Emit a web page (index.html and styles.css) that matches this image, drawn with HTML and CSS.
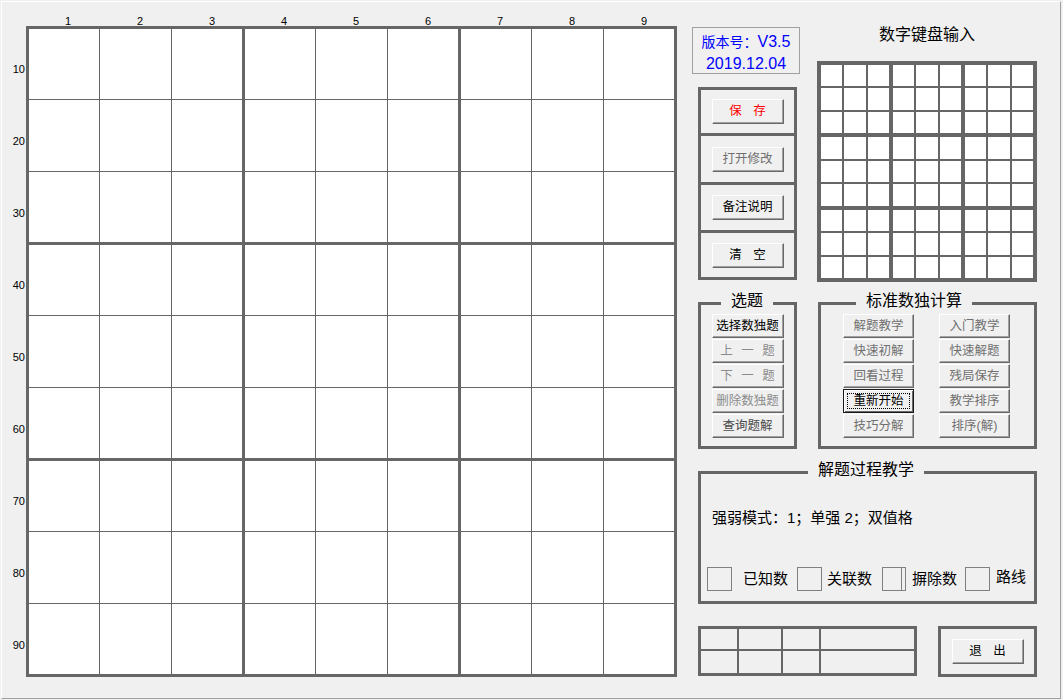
FILE: index.html
```html
<!DOCTYPE html>
<html lang="zh-CN">
<head>
<meta charset="utf-8">
<title>数独</title>
<link rel="stylesheet" href="styles.css">
</head>
<body>
<div class="window">
  <section class="board">
    <div class="col-labels">
      <span>1</span><span>2</span><span>3</span><span>4</span><span>5</span><span>6</span><span>7</span><span>8</span><span>9</span>
    </div>
    <div class="row-labels">
      <span>10</span><span>20</span><span>30</span><span>40</span><span>50</span><span>60</span><span>70</span><span>80</span><span>90</span>
    </div>
    <div class="grid">
      <div class="block"><span></span><span></span><span></span><span></span><span></span><span></span><span></span><span></span><span></span></div>
      <div class="block"><span></span><span></span><span></span><span></span><span></span><span></span><span></span><span></span><span></span></div>
      <div class="block"><span></span><span></span><span></span><span></span><span></span><span></span><span></span><span></span><span></span></div>
      <div class="block"><span></span><span></span><span></span><span></span><span></span><span></span><span></span><span></span><span></span></div>
      <div class="block"><span></span><span></span><span></span><span></span><span></span><span></span><span></span><span></span><span></span></div>
      <div class="block"><span></span><span></span><span></span><span></span><span></span><span></span><span></span><span></span><span></span></div>
      <div class="block"><span></span><span></span><span></span><span></span><span></span><span></span><span></span><span></span><span></span></div>
      <div class="block"><span></span><span></span><span></span><span></span><span></span><span></span><span></span><span></span><span></span></div>
      <div class="block"><span></span><span></span><span></span><span></span><span></span><span></span><span></span><span></span><span></span></div>
    </div>
  </section>

  <aside class="panel">
    <div class="top">
      <div class="left-col">
        <div class="version"><span class="cjk">版本号：</span>V3.5<br>2019.12.04</div>
        <div class="file-box">
          <div class="file-sec s1"><button class="btn wide red">保 存</button></div>
          <div class="file-sec s2"><button class="btn gray">打开修改</button></div>
          <div class="file-sec s3"><button class="btn">备注说明</button></div>
          <div class="file-sec s4"><button class="btn wide">清 空</button></div>
        </div>
      </div>
      <div class="right-col">
        <div class="kp-title">数字键盘输入</div>
        <div class="keypad">
          <div class="kp-block"><span></span><span></span><span></span><span></span><span></span><span></span><span></span><span></span><span></span></div>
          <div class="kp-block"><span></span><span></span><span></span><span></span><span></span><span></span><span></span><span></span><span></span></div>
          <div class="kp-block"><span></span><span></span><span></span><span></span><span></span><span></span><span></span><span></span><span></span></div>
          <div class="kp-block"><span></span><span></span><span></span><span></span><span></span><span></span><span></span><span></span><span></span></div>
          <div class="kp-block"><span></span><span></span><span></span><span></span><span></span><span></span><span></span><span></span><span></span></div>
          <div class="kp-block"><span></span><span></span><span></span><span></span><span></span><span></span><span></span><span></span><span></span></div>
          <div class="kp-block"><span></span><span></span><span></span><span></span><span></span><span></span><span></span><span></span><span></span></div>
          <div class="kp-block"><span></span><span></span><span></span><span></span><span></span><span></span><span></span><span></span><span></span></div>
          <div class="kp-block"><span></span><span></span><span></span><span></span><span></span><span></span><span></span><span></span><span></span></div>
        </div>
      </div>
    </div>

    <div class="groups">
      <fieldset class="group pick">
        <legend>选题</legend>
        <div class="btn-col">
          <button class="btn sm">选择数独题</button>
          <button class="btn sm dim spread">上 一 题</button>
          <button class="btn sm dim spread">下 一 题</button>
          <button class="btn sm dim">删除数独题</button>
          <button class="btn sm darkgray">查询题解</button>
        </div>
      </fieldset>
      <fieldset class="group calc">
        <legend>标准数独计算</legend>
        <div class="calc-cols">
          <div class="btn-col">
            <button class="btn sm narrow gray">解题教学</button>
            <button class="btn sm narrow gray">快速初解</button>
            <button class="btn sm narrow gray">回看过程</button>
            <button class="btn sm narrow focus">重新开始</button>
            <button class="btn sm narrow gray">技巧分解</button>
          </div>
          <div class="btn-col">
            <button class="btn sm narrow gray">入门教学</button>
            <button class="btn sm narrow gray">快速解题</button>
            <button class="btn sm narrow gray">残局保存</button>
            <button class="btn sm narrow gray">教学排序</button>
            <button class="btn sm narrow gray">排序(解)</button>
          </div>
        </div>
      </fieldset>
    </div>

    <fieldset class="group teach">
      <legend>解题过程教学</legend>
      <p class="mode">强弱模式：1；单强 2；双值格</p>
      <div class="checks">
        <span class="box"></span><span class="lbl l1">已知数</span>
        <span class="box b2"></span><span class="lbl l2">关联数</span>
        <span class="box b3 double"></span><span class="lbl l3">摒除数</span>
        <span class="box b4"></span><span class="lbl l4">路线</span>
      </div>
    </fieldset>

    <div class="bottom">
      <div class="stat-table">
        <span></span><span></span><span></span><span></span>
        <span></span><span></span><span></span><span></span>
      </div>
      <div class="exit-box"><button class="btn wide">退 出</button></div>
    </div>
  </aside>
</div>
</body>
</html>
```

FILE: styles.css
```css
* { box-sizing: border-box; }

html, body {
  margin: 0;
  padding: 0;
  background: #f0f0f0;
}

body {
  width: 1063px;
  height: 700px;
  overflow: hidden;
  font-family: "Liberation Sans", "Noto Sans CJK SC", sans-serif;
  color: #000;
}

.window {
  margin: 1px 0 0 1px;
  width: 1060px;
  height: 698px;
  border-top: 1px solid #fff;
  border-left: 1px solid #fff;
  border-right: 1px solid #a0a0a0;
  border-bottom: 1px solid #a0a0a0;
  display: flex;
  align-items: flex-start;
}

/* ---------- main board ---------- */
.board {
  display: grid;
  grid-template-columns: 24px 651px;
  grid-template-rows: 24px 651px;
  font-size: 11px;
  line-height: 11px;
}

.col-labels {
  grid-column: 2;
  grid-row: 1;
  display: flex;
  padding-left: 1px;
}

.col-labels span {
  width: 72px;
  padding: 14px 0 0 10px;
  text-align: center;
}

.row-labels {
  grid-column: 1;
  grid-row: 2;
  display: flex;
  flex-direction: column;
  padding-top: 1px;
}

.row-labels span {
  height: 72px;
  padding: 37px 1px 0 0;
  text-align: right;
}

.grid {
  grid-column: 2;
  grid-row: 2;
  border: 3px solid #666;
  background: #666;
  display: grid;
  grid-template-columns: repeat(3, 213px);
  grid-template-rows: repeat(3, 213px);
  gap: 3px;
}

.block {
  display: grid;
  grid-template-columns: 70px 71px 70px;
  grid-template-rows: 70px 71px 70px;
  gap: 1px;
}

.block span { background: #fff; }

/* ---------- right panel ---------- */
.panel {
  margin-left: 21px;
  width: 339px;
  display: flex;
  flex-direction: column;
}

.top {
  display: flex;
  align-items: flex-start;
}

.left-col {
  width: 99px;
  display: flex;
  flex-direction: column;
}

.version {
  margin: 25px 0 0 -6px;
  width: 108px;
  height: 47px;
  border: 1px solid #a0a0a0;
  padding-top: 3px;
  font-size: 16px;
  line-height: 21px;
  color: #0000ff;
  text-align: center;
}

.version .cjk { font-size: 14px; }

.file-box {
  margin-top: 13px;
  width: 99px;
  border: 3px solid #666;
  display: flex;
  flex-direction: column;
}

.file-sec {
  display: flex;
  align-items: center;
  justify-content: center;
}

.file-sec.s1 { height: 43px; }
.file-sec.s2 { height: 49px; border-top: 3px solid #666; }
.file-sec.s3 { height: 48px; border-top: 3px solid #666; }
.file-sec.s4 { height: 47px; border-top: 3px solid #666; }

.right-col {
  margin-left: 20px;
  width: 220px;
  display: flex;
  flex-direction: column;
}

.kp-title {
  margin-top: 23px;
  font-size: 16px;
  line-height: 20px;
  text-align: center;
}

.keypad {
  margin-top: 16px;
  width: 220px;
  height: 221px;
  border: 4px solid #666;
  background: #666;
  display: grid;
  grid-template-columns: repeat(3, 1fr);
  grid-template-rows: repeat(3, 1fr);
  gap: 4px;
}

.kp-block {
  display: grid;
  grid-template-columns: repeat(3, 1fr);
  grid-template-rows: repeat(3, 1fr);
  gap: 2px;
}

.kp-block span { background: #fff; }

/* ---------- buttons ---------- */
.btn {
  appearance: none;
  margin: 0;
  padding: 0;
  width: 72px;
  height: 25px;
  font-family: "Liberation Sans", "Noto Sans CJK SC", sans-serif;
  font-size: 12.5px;
  line-height: 1;
  color: #000;
  background: #f0f0f0;
  border: 1px solid;
  border-color: #fff #696969 #696969 #fff;
  box-shadow: inset -1px -1px 0 #a0a0a0;
  white-space: pre;
}

.btn.sm { height: 24px; }
.btn.narrow { width: 71px; }
.btn.wide { word-spacing: 8px; }
.btn.spread { word-spacing: 5px; }
.btn.red { color: #ff0000; }
.btn.gray { color: #707070; }
.btn.dim { color: #8c8c8c; }
.btn.darkgray { color: #4a4a4a; }

.btn.focus {
  position: relative;
  border: 1px solid #1a1a1a;
  box-shadow: inset 1px 1px 0 #fff, inset -1px -1px 0 #696969;
}

.btn.focus::after {
  content: "";
  position: absolute;
  inset: 3px;
  border: 1px dotted #000;
}

/* ---------- group boxes ---------- */
.groups {
  margin-top: 10px;
  display: flex;
  gap: 21px;
}

.group {
  margin: 0;
  padding: 0;
  min-width: 0;
  border: 3px solid #666;
}

.group legend {
  padding: 0 10px 4px;
  font-size: 16px;
  line-height: 18px;
}

.pick { width: 99px; padding: 0 0 8px; }
.pick legend { margin-left: 20px; }
.pick .btn-col { align-items: center; }

.calc { width: 219px; padding: 0 0 8px 22px; }
.calc legend { margin-left: 13px; }

.btn-col {
  display: flex;
  flex-direction: column;
  gap: 1px;
}

.calc-cols {
  display: flex;
  gap: 25px;
}

.teach {
  margin-top: 12px;
  width: 339px;
  padding: 0 0 10px;
}

.teach legend { margin-left: 107px; }

.mode {
  margin: 25px 0 0 11px;
  font-size: 15px;
  line-height: 20px;
}

.checks {
  margin: 39px 0 0 6px;
  display: flex;
  align-items: center;
  height: 24px;
  font-size: 15px;
  line-height: 20px;
}

.box {
  width: 25px;
  height: 24px;
  border: 1px solid #808080;
}

.box.b2 { margin-left: 9px; }
.box.b3 { margin-left: 10px; width: 24px; }
.box.b4 { margin-left: 8px; }
.box.double { box-shadow: inset -3px 0 0 #f0f0f0, inset -4px 0 0 #808080; }

.lbl.l1 { margin-left: 11px; }
.lbl.l2 { margin-left: 5px; }
.lbl.l3 { margin-left: 6px; }
.lbl.l4 { margin-left: 6px; margin-bottom: 4px; }

/* ---------- bottom row ---------- */
.bottom {
  margin-top: 22px;
  display: flex;
  gap: 21px;
}

.stat-table {
  width: 219px;
  height: 50px;
  border: 3px solid #666;
  background: #666;
  display: grid;
  grid-template-columns: 36px 42px 36px 93px;
  grid-template-rows: 20px 22px;
  gap: 2px;
}

.stat-table span { background: #f0f0f0; }

.exit-box {
  width: 99px;
  height: 51px;
  border: 3px solid #666;
  display: flex;
  align-items: center;
  justify-content: center;
}
```
